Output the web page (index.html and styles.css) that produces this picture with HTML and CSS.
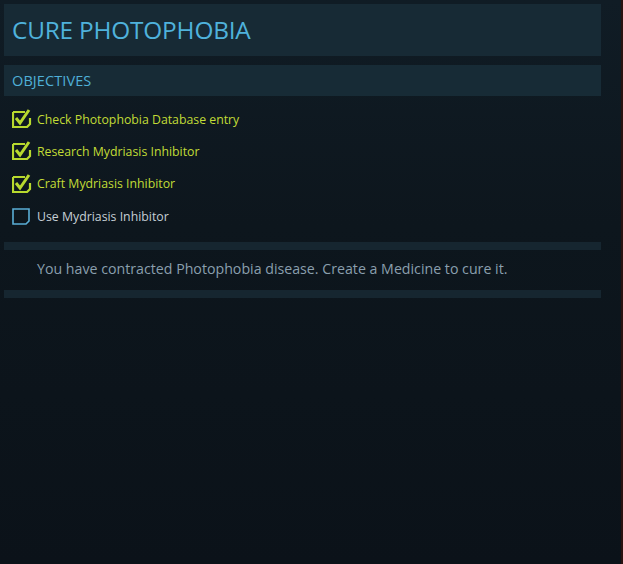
FILE: index.html
```html
<!DOCTYPE html>
<html lang="en">
<head>
    <meta charset="UTF-8">
    <title>Cure Photophobia</title>
    <link rel="stylesheet" href="styles.css">
</head>
<body>
    <div class="panel">
        <div class="title-bar">
            <h1>CURE PHOTOPHOBIA</h1>
        </div>
        <div class="section-bar">OBJECTIVES</div>

        <ul class="objectives">
            <li class="done">
                <span class="box">
                    <svg viewBox="0 0 20 20" width="20" height="20"><path d="M1 4h12M1 4v15h14l3-3v-6" fill="none" stroke="currentColor" stroke-width="2.2"/><path d="M4 10l4 5 9-13" fill="none" stroke="currentColor" stroke-width="3"/></svg>
                </span>
                Check Photophobia Database entry
            </li>
            <li class="done">
                <span class="box">
                    <svg viewBox="0 0 20 20" width="20" height="20"><path d="M1 4h12M1 4v15h14l3-3v-6" fill="none" stroke="currentColor" stroke-width="2.2"/><path d="M4 10l4 5 9-13" fill="none" stroke="currentColor" stroke-width="3"/></svg>
                </span>
                Research Mydriasis Inhibitor
            </li>
            <li class="done">
                <span class="box">
                    <svg viewBox="0 0 20 20" width="20" height="20"><path d="M1 4h12M1 4v15h14l3-3v-6" fill="none" stroke="currentColor" stroke-width="2.2"/><path d="M4 10l4 5 9-13" fill="none" stroke="currentColor" stroke-width="3"/></svg>
                </span>
                Craft Mydriasis Inhibitor
            </li>
            <li>
                <span class="box">
                    <svg viewBox="0 0 20 20" width="20" height="20"><path d="M1 4h16v12l-3 3H1z" fill="none" stroke="currentColor" stroke-width="1.6"/></svg>
                </span>
                Use Mydriasis Inhibitor
            </li>
        </ul>

        <div class="divider"></div>
        <p class="description">You have contracted Photophobia disease. Create a Medicine to cure it.</p>
        <div class="divider"></div>
    </div>
</body>
</html>
```

FILE: styles.css
```css
html, body {
    height: 100%;
}
body {
    margin: 0;
    font-family: "Open Sans", Arial, sans-serif;
    background: linear-gradient(180deg, #101c25 0%, #0d161d 40%, #0b1219 100%);
    border-right: 2px solid #2a1210;
    box-sizing: border-box;
}
.panel {
    width: 597px;
    padding: 4px 0 0 4px;
}
.title-bar {
    height: 52px;
    background-color: #172a35;
    display: flex;
    align-items: center;
    padding-left: 8px;
}
h1 {
    margin: 0 0 2px;
    font-size: 24.4px;
    font-weight: 400;
    color: #4fb2dc;
    letter-spacing: -0.2px;
}
.section-bar {
    margin-top: 9px;
    height: 31px;
    background-color: #172b36;
    color: #4fb0d8;
    font-size: 14.5px;
    line-height: 31px;
    padding-left: 8px;
    letter-spacing: 0.1px;
}
.objectives {
    list-style: none;
    margin: 7px 0 0;
    padding: 0 0 0 8px;
}
.objectives li {
    height: 32.3px;
    display: flex;
    align-items: center;
    gap: 5px;
    font-size: 12.3px;
    color: #c6cfd6;
}
.objectives li.done {
    color: #c2dc36;
}
.box {
    width: 20px;
    height: 20px;
    display: block;
    color: #5aaed6;
    margin-top: -2px;
}
.done .box {
    color: #b8d92e;
}
.divider {
    height: 8px;
    background-color: #162630;
}
.objectives + .divider {
    margin-top: 10px;
}
.description {
    margin: 0;
    height: 40px;
    line-height: 38px;
    padding-left: 33px;
    font-size: 14.2px;
    color: #8a9fad;
}
```
